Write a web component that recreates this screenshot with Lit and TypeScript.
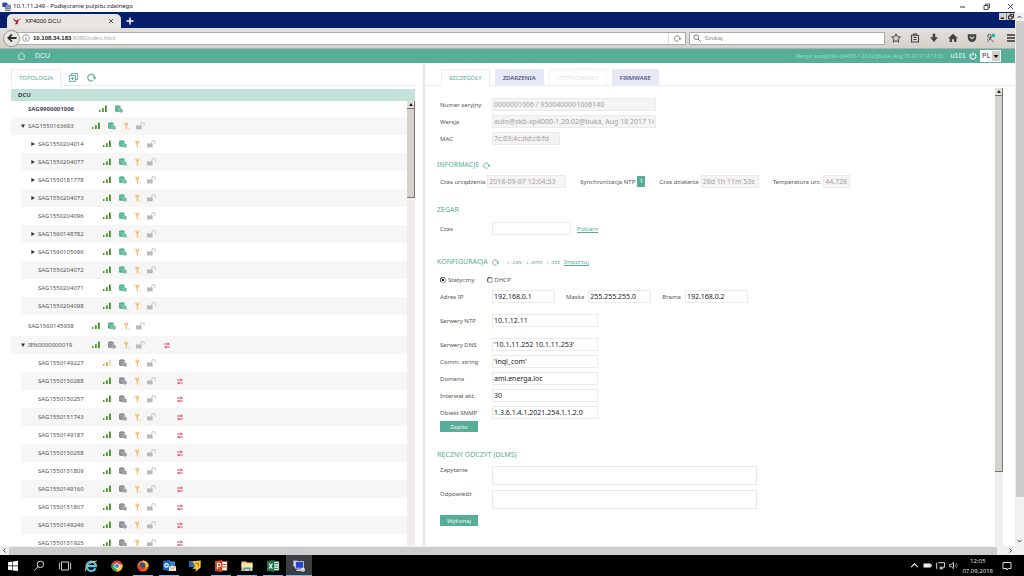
import { LitElement, html, css, svg, nothing } from "lit";
import { customElement, state } from "lit/decorators.js";
import { classMap } from "lit/directives/class-map.js";

type Node = {
  name: string;
  arrow?: "open" | "closed";
  main?: boolean;
  weak?: boolean;
  db: "green" | "grey";
  link?: boolean;
  children?: Node[];
};

const green = (name: string, arrow?: "closed"): Node => ({ name, arrow, db: "green" });
const grey = (name: string): Node => ({ name, db: "grey", link: true });

const TREE: Node[] = [
  { name: "SAG9900001006", main: true, db: "green" },
  {
    name: "SAG1550163693",
    arrow: "open",
    db: "green",
    children: [
      green("SAG1550204014", "closed"),
      green("SAG1550204077", "closed"),
      green("SAG1550181778", "closed"),
      green("SAG1550204073", "closed"),
      green("SAG1550204096"),
      green("SAG1560148782", "closed"),
      green("SAG1560105096", "closed"),
      green("SAG1550204072"),
      green("SAG1550204071"),
      green("SAG1550204098"),
    ],
  },
  { name: "SAG1560145938", db: "green" },
  {
    name: "IEN0000000019",
    arrow: "open",
    db: "grey",
    link: true,
    children: [
      { name: "SAG1550149227", db: "grey", weak: true },
      grey("SAG1550150288"),
      grey("SAG1550150257"),
      grey("SAG1550151743"),
      grey("SAG1550149187"),
      grey("SAG1550150258"),
      grey("SAG1550151809"),
      grey("SAG1550149160"),
      grey("SAG1550151807"),
      grey("SAG1550149246"),
      grey("SAG1550151925"),
    ],
  },
];

const signalIcon = (weak?: boolean) => html`<svg class="i-signal" viewBox="0 0 8 8">
  <rect x="0" y="5" width="1.5" height="2" fill=${weak ? "#e8a04c" : "#4c9a2a"} />
  <rect x="3" y="3.2" width="1.8" height="3.8" fill=${weak ? "#e8a04c" : "#4c9a2a"} />
  <rect x="6" y=".6" width="1.8" height="6.4" fill=${weak ? "#f0d9bd" : "#3f8f22"} />
</svg>`;

const dbIcon = (kind: string) => {
  const c = kind === "green" ? "#4fb08f" : "#85898d";
  return html`<svg class="i-db" viewBox="0 0 8 8">
    <path d="M0 1Q2.8 -.4 5.6 1V6.3Q2.8 7.6 0 6.3Z" fill=${c} />
    <path d="M.4 2.4H5.2M.4 4.2H5.2" stroke="#fff" stroke-width=".4" opacity=".6" />
    <circle cx="5.9" cy="5.7" r="2.1" fill=${c} stroke="#fff" stroke-width=".4" />
    <path d="M5 5.6l.7.7 1.1-1.2" stroke="#fff" stroke-width=".5" fill="none" />
  </svg>`;
};

const keyIcon = html`<svg class="i-key" viewBox="0 0 6 8">
  <path d="M.3 .8H4.3V2.6L3 4V7.4H1.7V4L.3 2.6Z" fill="#f3bd72" />
  <rect x="1.8" y="1.3" width="1" height="1" fill="#fff" />
  <rect x="4.6" y="6.4" width="1.1" height="1.1" fill="#f3bd72" />
</svg>`;

const lockIcon = html`<svg class="i-lock" viewBox="0 0 9 8">
  <rect x="0" y="3.4" width="5.6" height="4" fill="#b9b9b9" />
  <path d="M4.8 3.6V2.2A1.7 1.7 0 0 1 8.2 2.2V3.8" stroke="#c0c0c0" stroke-width="1" fill="none" />
</svg>`;

const linkIcon = html`<svg class="i-link" viewBox="0 0 6 7">
  <path d="M0 2H4.2M1.6 5H6" stroke="#e0566a" stroke-width="1.2" />
  <path d="M3.7 .2L6 2 3.7 3.6ZM2.3 3.4L0 5 2.3 6.8Z" fill="#e0566a" />
</svg>`;

const reloadIcon = html`<svg viewBox="0 0 10 10">
  <path d="M6.6 8.4A3.8 3.8 0 1 1 8.5 5" fill="none" stroke="currentColor" stroke-width="1.3" />
  <path d="M6.2 4.6H10.2L8.4 7.4Z" fill="currentColor" />
</svg>`;

const TASKS = [
  { id: "start", label: "Start", art: svg`<path d="M2 3.2L6.4 2.6V6.6H2ZM7 2.5L12 1.8V6.6H7ZM2 7.3H6.4V11.3L2 10.7ZM7 7.3H12V12L7 11.4Z" fill="#fff"/>` },
  { id: "search", label: "Szukaj", art: svg`<circle cx="8.4" cy="5.4" r="3.2" fill="none" stroke="#ddd"/><path d="M6 7.8L2.2 11.6" stroke="#ddd"/>` },
  { id: "view", label: "Widok zadań", art: svg`<rect x="3.5" y="3" width="7" height="8" fill="none" stroke="#ccc"/><path d="M2 4H1.4V10H2M12 4H12.6V10H12" fill="none" stroke="#ccc"/>` },
  { id: "ie", label: "Internet Explorer", art: svg`<path d="M11.5 9.2A4.7 4.7 0 1 1 11.9 7.2H3.8" fill="none" stroke="#5cc4f2" stroke-width="2.2"/><path d="M2 12C-.5 12 4 3 12.8 2" fill="none" stroke="#f3d04b" stroke-width="1"/>` },
  { id: "chrome", label: "Chrome", art: svg`<circle cx="7" cy="7" r="5.6" fill="#e04436"/><path d="M7 7L2 4.4A5.6 5.6 0 0 0 6.6 12.6Z" fill="#34a350"/><path d="M7 7L12.2 5A5.6 5.6 0 0 1 6.6 12.6Z" fill="#fbcb2c"/><circle cx="7" cy="7" r="2.7" fill="#fff"/><circle cx="7" cy="7" r="2.1" fill="#3f82ee"/>` },
  { id: "firefox", label: "Firefox", open: true, art: svg`<circle cx="7" cy="7" r="5.6" fill="#f06a1c"/><path d="M7 1.4A5.6 5.6 0 0 1 12.6 7L9.5 8.5 6 5Z" fill="#f9c22c"/><circle cx="6.6" cy="6.4" r="2.8" fill="#2b4fa5"/><path d="M1.6 4.5Q3.4 9 9.6 8.8 7 12 3.6 11.2Z" fill="#e43a25"/>` },
  { id: "outlook", label: "Outlook", open: true, art: svg`<path d="M1 2L8 1V12L1 11Z" fill="#0f6cbd"/><rect x="8" y="2.4" width="5" height="6" fill="#2a8ad4"/><circle cx="4.5" cy="6.4" r="1.7" fill="none" stroke="#fff" stroke-width="1.2"/><rect x="7" y="7" width="7" height="5" fill="#fbe3d0"/><path d="M7 7L10.5 10 14 7" fill="none" stroke="#dc7b3b" stroke-width=".8"/>` },
  { id: "editor", label: "Edytor", art: svg`<rect x="1" y="2" width="6.4" height="6" fill="#2d62b4"/><path d="M4.4 2.2L12.8 1.6 12.6 8.6 7.6 12.8 7.8 10 4.2 9.4 7.2 7.6Z" fill="#f6c534"/><path d="M7.4 4.4H10.4V7.4" fill="none" stroke="#7a5a10" stroke-width=".8"/>` },
  { id: "ppt", label: "PowerPoint", open: true, art: svg`<rect x="7" y="2.4" width="6" height="9" fill="#fff" stroke="#d24726" stroke-width=".7"/><path d="M8.5 5.5H12M8.5 8H12" stroke="#d24726"/><path d="M1 2L8.4 1V13L1 12Z" fill="#d24726"/><path d="M3.5 10V4.3H5A1.6 1.6 0 0 1 5 7.5H3.5" fill="none" stroke="#fff" stroke-width="1.1"/>` },
  { id: "files", label: "Eksplorator", open: true, art: svg`<path d="M1.5 2.5H6L7 3.6H12.5V12H1.5Z" fill="#f4d270"/><rect x="1.5" y="4.6" width="11" height="4" fill="#fbe9a8"/><path d="M3.5 12V8.5H10.5V12H9V10H5V12Z" fill="#3f9be0"/>` },
  { id: "excel", label: "Excel", open: true, art: svg`<rect x="7" y="2.4" width="6" height="9" fill="#fff" stroke="#217346" stroke-width=".7"/><path d="M8.6 4.5H12M8.6 7H12M8.6 9.4H12" stroke="#217346"/><path d="M1 2L8.4 1V13L1 12Z" fill="#217346"/><path d="M3 4.5L6.4 9.6M6.4 4.5L3 9.6" stroke="#fff" stroke-width="1.1"/>` },
  { id: "rdp", label: "Pulpit zdalny", open: true, active: true, art: svg`<rect x="1.4" y="1.6" width="4" height="6" fill="#cdd8ee"/><rect x="3.4" y="2.6" width="8" height="6.6" fill="#2446d5" stroke="#cdd8ee" stroke-width=".8"/><path d="M4 12H11V10.2H5Z" fill="#cfd4da"/><circle cx="11" cy="10.8" r="2" fill="#e9efe6"/><path d="M10 10.8l.8.8 1.2-1.4" fill="none" stroke="#4a8a4a" stroke-width=".6"/>` },
];

@customElement("app-root")
export class AppRoot extends LitElement {
  @state() private mode = "static";

  static styles = css`
    :host { display: block; height: 100vh; overflow: hidden; font-family: "Liberation Sans", "Noto Sans", sans-serif; font-size: 6px; line-height: 8px; color: #555; background: #fff; }
    * { box-sizing: border-box; }
    svg { display: block; flex: none; }
    button, input, select, textarea { font: inherit; color: inherit; margin: 0; padding: 0; border: 0; border-radius: 0; background: none; }
    button { display: flex; align-items: center; justify-content: center; }
    ul { list-style: none; margin: 0; padding: 0; }
    .screen { display: flex; flex-direction: column; height: 100%; }

    .titlebar { flex: none; display: flex; align-items: center; height: 12px; padding: 0 9px 0 2px; gap: 2px; font-family: "Noto Sans", sans-serif; font-size: 6px; color: #222; background: #fff; }
    .titlebar span { flex: 1; }
    .winbtns { display: flex; gap: 15px; }
    .winbtns svg { width: 9px; height: 9px; }
    .middle { flex: 1; min-height: 0; display: flex; }
    .remote { flex: 1; min-width: 0; display: flex; flex-direction: column; }

    .tabstrip { flex: none; display: flex; align-items: flex-end; height: 16px; padding-left: 7px; background: #061e6c; }
    .browsertab { display: flex; align-items: center; width: 114px; height: 14px; padding: 0 6px; gap: 4px; color: #222; background: #e9e6e1; border-radius: 5px 5px 0 0; }
    .browsertab span { flex: 1; }
    .browsertab svg { width: 8px; height: 8px; }
    .newtab { width: 18px; height: 14px; }
    .newtab svg { width: 8px; height: 8px; }
    .mdi { margin-left: auto; align-self: flex-start; display: flex; padding-top: 1px; }
    .mdi svg { width: 8px; height: 7px; }

    .toolbar { flex: none; display: flex; align-items: center; height: 21px; padding-left: 3px; background: linear-gradient(#e4e1dc, #d3d0ca); border-bottom: 1px solid #b3b0aa; color: #444; }
    .back { z-index: 1; width: 17px; height: 17px; border: 1px solid #9b9890; border-radius: 50%; background: #e9e7e3; }
    .back svg { width: 10px; height: 10px; }
    .urlbox { flex: 672; display: flex; align-items: center; height: 13px; margin-left: -4px; padding-left: 5px; gap: 3px; background: #fff; border: 1px solid #aaa; }
    .urlbox b { color: #222; font-weight: 700; }
    .urlbox .path { flex: 1; color: #aaa; }
    .urlbox .info { width: 8px; height: 8px; }
    .urlreload { width: 17px; height: 11px; border-left: 1px solid #ddd; color: #777; }
    .urlreload svg { width: 7px; height: 7px; }
    .searchbox { flex: 193; min-width: 0; display: flex; align-items: center; height: 13px; margin-left: 3px; padding-left: 3px; gap: 3px; background: #fff; border: 1px solid #aaa; }
    .searchbox svg { width: 8px; height: 8px; }
    .searchbox input { flex: 1; min-width: 0; outline: none; }
    .searchbox input::placeholder { color: #888; }
    .tools { flex: none; display: flex; gap: 9px; padding-left: 6px; }
    .tools svg { width: 10px; height: 10px; }

    .appbar { flex: none; display: flex; align-items: center; height: 14px; padding: 0 14px 0 17px; background: #56ae98; color: #eefaf6; font-size: 7px; }
    .appbar .home { width: 9px; height: 8px; margin-right: 9px; }
    .appbar .ver { margin-left: auto; margin-right: 7px; font-family: "Noto Sans", sans-serif; font-size: 5px; color: #a5dccd; }
    .appbar .power { width: 8px; height: 8px; margin: 0 3px 0 3px; }
    .lang { display: flex; height: 12px; background: #fff; }
    .lang select { appearance: none; width: 21px; padding: 0 10px 0 2px; color: #333; background: linear-gradient(#d4d0c8, #d4d0c8) right 1px center / 8px 10px no-repeat; border: 0; }
    .lang svg { width: 6px; height: 12px; margin-left: -8px; margin-right: 2px; pointer-events: none; }

    .page { flex: 1; min-height: 0; display: flex; font-family: "Noto Sans", sans-serif; }
    .left { flex: 404; min-width: 0; display: flex; flex-direction: column; margin: 6px 8px 0 11px; }
    .right { flex: 590; min-width: 0; display: flex; flex-direction: column; border-left: 2px solid #e6e6e6; padding-top: 6px; }

    .tabs { flex: none; display: flex; height: 17px; color: #56ae98; }
    .tabs::after { content: ""; flex: 1; border-bottom: 1px solid #ededed; }
    .tabs .spacer { width: 5px; border-bottom: 1px solid #ededed; }
    .tabs .lead { width: 16px; border-bottom: 1px solid #ededed; }
    .tab { padding: 0 7px; color: #56ae98; border: 1px solid #ededed; border-bottom: 0; }
    .tab.blue { color: #3b4a7a; background: #e6e9f3; border-color: #e6e9f3; font-weight: 500; }
    .tab.off { color: #dcdfe9; border-color: #f3f3f3; border-bottom: 1px solid #ededed; }
    .iconbtn { height: 17px; width: 12px; color: #56ae98; border-bottom: 1px solid #ededed; }
    .iconbtn svg { width: 9px; height: 9px; }
    .iconbtn.first { width: 24px; }

    .treehead { flex: none; height: 12px; margin-top: 3px; padding: 2px 7px; background: #c3e2da; color: #222; font-weight: 600; }
    .treebox { flex: 1; min-height: 0; display: flex; overflow: hidden; }
    .tree { flex: 1; min-width: 0; line-height: 6px; }
    .top + .top ~ .top { margin-top: 1px; }
    .kids { padding-bottom: 1px; }
    .node { display: flex; align-items: center; height: 18px; padding-left: 9px; }
    .node.main { height: 16px; font-weight: 700; color: #444c5c; }
    .node.alt { background: #f6f6f6; }
    .kids { margin-left: 10px; }
    .arrow { flex: none; width: 8px; height: 18px; color: #333; }
    .arrow svg { width: 4px; height: 4px; margin-right: 3px; }
    .name { flex: none; width: 64px; }
    .main .name { width: 71px; }
    .icons { display: flex; align-items: center; }
    .i-signal { width: 8px; height: 8px; margin-right: 8px; }
    .i-db { width: 8px; height: 8px; margin-right: 8px; }
    .i-key { width: 6px; height: 8px; margin-right: 6px; }
    .i-lock { width: 9px; height: 8px; margin-right: 21px; }
    .i-link { width: 6px; height: 7px; }
    .top > .node .i-lock { margin-right: 19px; }
    .kids .icons { padding-left: 1px; }

    .vbar { flex: none; width: 8px; display: flex; flex-direction: column; background: #efeeec; }
    .vbar .up { height: 8px; background: #e4e1db; border-right: 1px solid #777; border-bottom: 1px solid #777; display: flex; align-items: center; justify-content: center; }
    .vbar .up svg { width: 4px; height: 3px; }
    .vbar .thumb { background: #d5d2cc; border-right: 1px solid #777; border-bottom: 1px solid #777; }
    .treebox .thumb { height: 20%; }
    .rightbody { flex: 1; min-height: 0; display: flex; padding-right: 12px; }
    .rightbody .vbar { margin-top: 2px; }
    .rightbody .thumb { height: 82%; }

    .detail { flex: 1; min-width: 0; overflow: hidden; padding: 10px 0 0 15px; }
    .row { display: flex; align-items: center; height: 17px; }
    .lab { flex: none; width: 52px; }
    .field { flex: none; height: 13px; padding: 0 1px; border: 1px solid #ebebeb; background: #fff; color: #222; font-size: 7px; outline: none; }
    .field:disabled { background: #f5f3f4; border-color: #eceaeb; color: #a3a1a3; }
    .w-serial { width: 164px; }
    .w-mac { width: 68px; }
    .w-time { width: 79px; }
    .w-up { width: 58px; }
    .w-temp { width: 27px; }
    .w-ip { width: 63px; }
    .w-std { width: 106px; }
    h2 { display: flex; align-items: center; height: 12px; margin: 12px 0 2px -3px; font-size: 7px; font-weight: 400; color: #56ae98; }
    h2.zegar { margin: 14px 0 4px -3px; }
    h2.konf { margin: 19px 0 4px -3px; }
    h2.dlms { margin: 17px 0 5px -3px; }
    .mini { margin-left: 4px; color: #56ae98; }
    .mini svg { width: 7px; height: 7px; }
    a { color: #56ae98; text-decoration: none; font-size: 6px; }
    a.u { text-decoration: underline; }
    .files { display: flex; gap: 4px; margin-left: 8px; }
    .row a { margin-left: 6px; }
    .info { gap: 14px; }
    .pair { display: flex; align-items: center; gap: 2px; white-space: nowrap; }
    .badge { width: 8px; height: 11px; padding-top: 1px; text-align: center; background: #56ae98; color: #fff; }
    .radios { display: flex; align-items: center; height: 16px; gap: 12px; }
    .radios label { display: flex; align-items: center; gap: 2px; }
    .radios input { appearance: none; width: 6px; height: 6px; border: 1px solid #aaa; border-top-color: #555; border-left-color: #555; border-radius: 50%; background: #fff; }
    .radios input:checked { background: radial-gradient(#222 35%, #fff 45%); }
    .wide { gap: 11px; }
    .wide .pair { gap: 4px; }
    .wide .lab { width: 48px; }
    .gap { margin-top: 7px; }
    .action { width: 38px; height: 11px; background: #56ae98; color: #e9f6f2; }
    .area { display: flex; margin-bottom: 5px; }
    .area textarea { width: 265px; height: 19px; border: 1px solid #e8e8e8; resize: none; outline: none; background: #fff; }
    .run { margin-top: 6px; }

    .outer { flex: none; width: 9px; display: flex; flex-direction: column; align-items: center; justify-content: space-between; background: #f1f1f1; }
    .outer svg { width: 5px; height: 9px; }
    .outer div { flex: 1; width: 8px; margin-bottom: 40px; background: #cdcdcd; }
    .hbar { flex: none; display: flex; align-items: center; height: 9px; padding-right: 9px; background: #f1f1f1; }
    .hbar svg { width: 9px; height: 5px; }
    .hbar div { flex: 1; height: 8px; margin-right: 9px; background: #cdcdcd; }

    .taskbar { flex: none; display: flex; height: 21px; background: #000; color: #eee; }
    .task { width: 26px; height: 21px; }
    .task.open { background: linear-gradient(#76b9ed, #76b9ed) bottom center / 20px 1px no-repeat; }
    .task.active { background: linear-gradient(#76b9ed, #76b9ed) bottom center / 26px 1px no-repeat #3c3e42; }
    .task svg { width: 14px; height: 14px; }
    .tray { margin-left: auto; display: flex; align-items: center; gap: 4px; padding-right: 12px; }
    .tray svg { width: 9px; height: 9px; }
    .tray .note { width: 10px; height: 10px; margin-left: 5px; }
    .clock { font-family: "Open Sans", "Noto Sans", sans-serif; font-size: 6px; line-height: 10px; text-align: center; }
  `;

  private renderNode(n: Node, alt: boolean) {
    return html`<div class=${classMap({ node: true, alt, main: !!n.main })}>
      ${n.arrow
        ? html`<button class="arrow" aria-label="Rozwiń ${n.name}">
            <svg viewBox="0 0 4 4"><path d=${n.arrow === "open" ? "M0 .5H4L2 4Z" : "M.3 0L4 2 .3 4Z"} fill="currentColor" /></svg>
          </button>`
        : html`<span class="arrow"></span>`}
      <span class="name">${n.name}</span>
      <span class="icons">
        ${signalIcon(n.weak)}${dbIcon(n.db)}${n.main ? nothing : html`${keyIcon}${lockIcon}`}${n.link ? linkIcon : nothing}
      </span>
    </div>`;
  }

  private renderTree() {
    let index = 0;
    const next = () => index++ % 2 === 1;
    return html`<ul class="tree">
      ${TREE.map(
        (n) => html`<li class="top">
          ${this.renderNode(n, next())}
          ${n.children ? html`<ul class="kids">${n.children.map((c) => html`<li>${this.renderNode(c, next())}</li>`)}</ul>` : nothing}
        </li>`
      )}
    </ul>`;
  }

  private renderField(id: string, label: string, value: string, width: string, disabled = false, extra = "") {
    return html`<div class="row ${extra}">
      <label class="lab" for=${id}>${label}</label>
      <input class="field ${width}" id=${id} .value=${value} ?disabled=${disabled} />
    </div>`;
  }

  private renderPair(id: string, label: string, value: string, width: string, disabled: boolean, lab = "") {
    return html`<span class="pair"><label class=${lab} for=${id}>${label}</label><input class="field ${width}" id=${id} .value=${value} ?disabled=${disabled} /></span>`;
  }

  private renderUp() {
    return html`<div class="up"><svg viewBox="0 0 4 3"><path d="M0 3L2 0 4 3Z" fill="#222" /></svg></div><div class="thumb"></div>`;
  }

  private renderBrowser() {
    return html`
      <div class="tabstrip">
        <div class="browsertab">
          <svg viewBox="0 0 8 8"><path d="M0 1L3 3.4 8 1.6 5.4 3.8 4.6 7 2 7.4 3 5 1 3.6Z" fill="#b3202c" /></svg>
          <span>XP4000 DCU</span>
          <svg viewBox="0 0 8 8"><path d="M2 2L6 6M6 2L2 6" stroke="#555" /></svg>
        </div>
        <button class="newtab" aria-label="Nowa karta"><svg viewBox="0 0 8 8"><path d="M4 .5V7.5M.5 4H7.5" stroke="#fff" stroke-width="1.4" /></svg></button>
        <div class="mdi">
          <svg viewBox="0 0 8 7"><rect width="7.6" height="7" fill="#d4d0c8" /><path d="M1.5 5.2H5" stroke="#000" stroke-width="1.2" /></svg>
          <svg viewBox="0 0 8 7"><rect width="8" height="7" fill="#d4d0c8" /><path d="M3 3V1.3H6.5V4.2H5M1.5 3H5V6H1.5Z" fill="none" stroke="#000" stroke-width=".8" /></svg>
        </div>
      </div>
      <div class="toolbar">
        <button class="back" aria-label="Wstecz"><svg viewBox="0 0 10 10"><path d="M9.5 5H1.5M5 1.3L1.3 5 5 8.7" fill="none" stroke="#333" stroke-width="1.8" /></svg></button>
        <div class="urlbox">
          <svg class="info" viewBox="0 0 8 8"><circle cx="4" cy="4" r="3.4" fill="none" stroke="#777" stroke-width=".7" /><path d="M4 3.5V6M4 1.9V2.7" stroke="#666" stroke-width=".8" /></svg>
          <span class="path"><b>10.108.34.183</b>:8080/index.html</span>
          <button class="urlreload" aria-label="Odśwież">${reloadIcon}</button>
        </div>
        <label class="searchbox">
          <svg viewBox="0 0 8 8"><circle cx="3.2" cy="3.2" r="2.3" fill="none" stroke="#666" stroke-width=".9" /><path d="M5 5L7.6 7.6" stroke="#666" /></svg>
          <input placeholder="Szukaj" aria-label="Szukaj" />
        </label>
        <div class="tools">
          <svg viewBox="0 0 10 10"><path d="M5 .8L6.3 3.7 9.4 4 7.1 6.1 7.8 9.2 5 7.6 2.2 9.2 2.9 6.1 .6 4 3.7 3.7Z" fill="none" stroke="#444" /></svg>
          <svg viewBox="0 0 10 10"><path d="M1.5 2.3H8.5V9H1.5ZM3.5 2V1H6.5V2M3.4 4.4H6.6M3.4 6.5H6.6" fill="none" stroke="#444" stroke-width="1.1" /></svg>
          <svg viewBox="0 0 10 10"><path d="M3.7 .8H6.3V4.2H9L5 9 1 4.2H3.7Z" fill="#444" /></svg>
          <svg viewBox="0 0 10 10"><path d="M5 .8L9.8 5.2H8.4V9H6V6.2H4V9H1.6V5.2H.2Z" fill="#444" /></svg>
          <svg viewBox="0 0 10 10"><path d="M.8 1.2H9.2V4.8A4.2 4.2 0 0 1 .8 4.8Z" fill="#444" /><path d="M2.8 3.6L5 5.7 7.2 3.6" fill="none" stroke="#ddd" stroke-width="1.2" /></svg>
          <svg viewBox="0 0 10 10"><circle cx="3.4" cy="3" r="1.7" fill="none" stroke="#555" /><path d="M1 9L7 3M3 5L8 9M1 6L3 8" stroke="#666" /><circle cx="7.4" cy="2.4" r="1.8" fill="#22b5a8" /></svg>
          <svg viewBox="0 0 10 10"><path d="M2 2H10M2 5H10M2 8H10" stroke="#333" stroke-width="1.4" /></svg>
        </div>
      </div>`;
  }

  private renderDetail() {
    return html`<div class="detail">
      ${this.renderField("serial", "Numer seryjny", "0000001006 / 9500400001006140", "w-serial", true)}
      ${this.renderField("version", "Wersja", "auto@zkb-xp4000-1.20.02@buka, Aug 18 2017 14:17:33", "w-serial", true)}
      ${this.renderField("mac", "MAC", "7c:03:4c:dd:c6:fd", "w-mac", true)}

      <h2>INFORMACJE <button class="mini" aria-label="Odśwież informacje">${reloadIcon}</button></h2>
      <div class="row info">
        ${this.renderPair("devtime", "Czas urządzenia", "2018-09-07 12:04:53", "w-time", true)}
        <span class="pair">Synchronizacja NTP <span class="badge">1</span></span>
        ${this.renderPair("uptime", "Czas działania", "28d 1h 11m 53s", "w-up", true)}
        ${this.renderPair("temp", "Temperatura urz.", "44.728", "w-temp", true)}
      </div>

      <h2 class="zegar">ZEGAR</h2>
      <div class="row">
        <label class="lab" for="clock">Czas</label><input class="field w-time" id="clock" /><a class="u" href="#">Pobierz</a>
      </div>

      <h2 class="konf">
        KONFIGURACJA <button class="mini" aria-label="Odśwież konfigurację">${reloadIcon}</button>
        <span class="files"><a href="#">↓ .csv</a><a href="#">↓ .xml</a><a href="#">↓ .txt</a><a class="u" href="#">Importuj</a></span>
      </h2>
      <div class="radios">
        <label><input type="radio" name="mode" .checked=${this.mode === "static"} @change=${() => (this.mode = "static")} />Statyczny</label>
        <label><input type="radio" name="mode" .checked=${this.mode === "dhcp"} @change=${() => (this.mode = "dhcp")} />DHCP</label>
      </div>
      <div class="row wide">
        ${this.renderPair("ip", "Adres IP", "192.168.0.1", "w-ip", false, "lab")}
        ${this.renderPair("mask", "Maska", "255.255.255.0", "w-ip", false)}
        ${this.renderPair("gate", "Brama", "192.168.0.2", "w-ip", false)}
      </div>
      ${this.renderField("ntp", "Serwery NTP", "10.1.12.11", "w-std", false, "gap")}
      ${this.renderField("dns", "Serwery DNS", "'10.1.11.252 10.1.11.253'", "w-std", false, "gap")}
      ${this.renderField("comm", "Comm. string", "'inql_com'", "w-std")}
      ${this.renderField("domain", "Domena", "ami.energa.loc", "w-std")}
      ${this.renderField("interval", "Interwał akt.", "30", "w-std")}
      ${this.renderField("snmp", "Obiekt SNMP", "1.3.6.1.4.1.2021.254.1.1.2.0", "w-std")}
      <button class="action">Zapisz</button>

      <h2 class="dlms">RĘCZNY ODCZYT (DLMS)</h2>
      <div class="area"><label class="lab" for="query">Zapytanie</label><textarea id="query"></textarea></div>
      <div class="area"><label class="lab" for="answer">Odpowiedź</label><textarea id="answer"></textarea></div>
      <button class="action run">Wykonaj</button>
    </div>`;
  }

  render() {
    return html`<div class="screen">
      <header class="titlebar">
        <svg width="9" height="9" viewBox="0 0 9 9"><rect x=".4" y=".6" width="5" height="4.4" fill="#2b46b0" /><rect x="3.4" y="3" width="5" height="4" fill="#7f98d8" stroke="#445" stroke-width=".5" /><path d="M3 8.4H8.6" stroke="#667" /></svg>
        <span>10.1.11.249 - Podłączanie pulpitu zdalnego</span>
        <div class="winbtns">
          <svg viewBox="0 0 9 9"><path d="M2 5H7" stroke="#222" stroke-width=".9" /></svg>
          <svg viewBox="0 0 9 9"><path d="M2 3.5H6V7.5H2ZM3.5 3.5V2H7.5V6H6" fill="none" stroke="#222" stroke-width=".8" /></svg>
          <svg viewBox="0 0 9 9"><path d="M2 2L7 7M7 2L2 7" stroke="#222" stroke-width=".8" /></svg>
        </div>
      </header>
      <div class="middle">
        <div class="remote">
          ${this.renderBrowser()}
          <div class="appbar">
            <svg class="home" viewBox="0 0 9 8"><path d="M.6 4L4.5 .7 8.4 4M1.8 3.4V7.4H7.2V3.4" fill="none" stroke="#d6f0e8" stroke-width=".8" /></svg>
            <span>DCU</span>
            <span class="ver">Wersja: auto@zkb-xp4000-1.20.02@buka, Aug 18 2017 14:17:33</span>
            <span>u101</span>
            <svg class="power" viewBox="0 0 8 8"><path d="M2.2 1.8A3 3 0 1 0 5.8 1.8M4 .4V3.8" fill="none" stroke="#fff" stroke-width="1.1" /></svg>
            <label class="lang"><select aria-label="Język"><option>PL</option></select><svg viewBox="0 0 6 12"><path d="M.5 5H5.5L3 8Z" fill="#111" /></svg></label>
          </div>
          <main class="page">
            <section class="left">
              <div class="tabs">
                <button class="tab">TOPOLOGIA</button>
                <button class="iconbtn first" aria-label="Rozwiń wszystko"><svg viewBox="0 0 9 9"><path d="M2.5 2.5V.6H8.4V6.5H6.6M.6 2.5H6.5V8.4H.6ZM3.5 4V7M2 5.5H5" fill="none" stroke="currentColor" stroke-width=".9" /></svg></button>
                <button class="iconbtn" aria-label="Odśwież">${reloadIcon}</button>
              </div>
              <div class="treehead">DCU</div>
              <div class="treebox">${this.renderTree()}<div class="vbar">${this.renderUp()}</div></div>
            </section>
            <section class="right">
              <div class="tabs">
                <span class="lead"></span>
                <button class="tab">SZCZEGÓŁY</button><span class="spacer"></span>
                <button class="tab blue">ZDARZENIA</button><span class="spacer"></span>
                <button class="tab off">UŻYTKOWNICY</button><span class="spacer"></span>
                <button class="tab blue">FIRMWARE</button>
              </div>
              <div class="rightbody">${this.renderDetail()}<div class="vbar">${this.renderUp()}</div></div>
            </section>
          </main>
        </div>
        <div class="outer">
          <svg viewBox="0 0 5 9"><path d="M.5 6L2.5 4 4.5 6" fill="none" stroke="#444" /></svg>
          <div></div>
          <svg viewBox="0 0 5 9"><path d="M.5 3L2.5 5 4.5 3" fill="none" stroke="#444" /></svg>
        </div>
      </div>
      <div class="hbar">
        <svg viewBox="0 0 9 5"><path d="M5.5 .5L3.5 2.5 5.5 4.5" fill="none" stroke="#444" /></svg>
        <div></div>
        <svg viewBox="0 0 9 5"><path d="M3.5 .5L5.5 2.5 3.5 4.5" fill="none" stroke="#444" /></svg>
      </div>
      <footer class="taskbar">
        ${TASKS.map((t) => html`<button class=${classMap({ task: true, open: !!t.open, active: !!t.active })} aria-label=${t.label}><svg viewBox="0 0 14 14">${t.art}</svg></button>`)}
        <div class="tray">
          <svg viewBox="0 0 8 8"><path d="M1 5.5L4 2.5 7 5.5" fill="none" stroke="#eee" /></svg>
          <svg viewBox="0 0 8 8"><rect x=".5" y="2.2" width="6.4" height="3.6" fill="#eee" /><rect x="7" y="3.2" width="1" height="1.6" fill="#eee" /></svg>
          <svg viewBox="0 0 8 8"><path d="M2 1.5H7.6V5.5H3M4.5 5.5V7M3 7H6.5M.6 1.5V7" fill="none" stroke="#eee" stroke-width=".8" /></svg>
          <svg viewBox="0 0 8 8"><path d="M.5 3H2L4 1.2V6.8L2 5H.5Z" fill="none" stroke="#eee" stroke-width=".7" /><path d="M5.3 2.8Q6.2 4 5.3 5.2M6.6 1.8Q8 4 6.6 6.2" fill="none" stroke="#999" stroke-width=".7" /></svg>
          <div class="clock">12:05<br />07.09.2018</div>
          <svg class="note" viewBox="0 0 10 10"><path d="M1 1.5H9V7.5H6.5L5 9 5 7.5H1Z" fill="none" stroke="#eee" stroke-width=".9" /></svg>
        </div>
      </footer>
    </div>`;
  }
}
